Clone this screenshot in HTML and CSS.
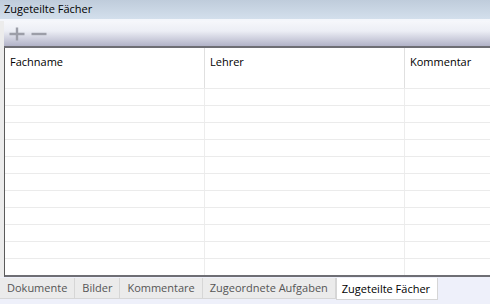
FILE: index.html
```
<!DOCTYPE html>
<html lang="de">
<head>
    <meta charset="UTF-8">
    <title>Zugeteilte Fächer</title>
    <link rel="stylesheet" href="styles.css">
</head>
<body>
    <div class="window">
        <div class="titlebar">Zugeteilte Fächer</div>
        <div class="panel">
            <div class="toolbar">
                <svg class="tool" width="16" height="14" viewBox="0 0 16 14"><path d="M8 0.5v13M0.5 7h15" stroke="#9c9ea8" stroke-width="2.4"/></svg>
                <svg class="tool" width="16" height="14" viewBox="0 0 16 14"><path d="M0.5 7h15" stroke="#9c9ea8" stroke-width="2.4"/></svg>
            </div>
            <div class="grid">
                <div class="row head">
                    <div class="cell">Fachname</div>
                    <div class="cell">Lehrer</div>
                    <div class="cell">Kommentar</div>
                </div>
                <div class="row"><div class="cell"></div><div class="cell"></div><div class="cell"></div></div>
                <div class="row"><div class="cell"></div><div class="cell"></div><div class="cell"></div></div>
                <div class="row"><div class="cell"></div><div class="cell"></div><div class="cell"></div></div>
                <div class="row"><div class="cell"></div><div class="cell"></div><div class="cell"></div></div>
                <div class="row"><div class="cell"></div><div class="cell"></div><div class="cell"></div></div>
                <div class="row"><div class="cell"></div><div class="cell"></div><div class="cell"></div></div>
                <div class="row"><div class="cell"></div><div class="cell"></div><div class="cell"></div></div>
                <div class="row"><div class="cell"></div><div class="cell"></div><div class="cell"></div></div>
                <div class="row"><div class="cell"></div><div class="cell"></div><div class="cell"></div></div>
                <div class="row"><div class="cell"></div><div class="cell"></div><div class="cell"></div></div>
                <div class="row last"><div class="cell"></div><div class="cell"></div><div class="cell"></div></div>
            </div>
        </div>
        <div class="tabs">
            <div class="tab">Dokumente</div>
            <div class="tab">Bilder</div>
            <div class="tab">Kommentare</div>
            <div class="tab">Zugeordnete Aufgaben</div>
            <div class="tab active">Zugeteilte Fächer</div>
        </div>
    </div>
</body>
</html>
```

FILE: styles.css
```
* { box-sizing: border-box; }
body { margin: 0; font-family: "Open Sans", "Noto Sans", sans-serif; font-size: 11px; color: #000; background: #eef0fa; }
.window { width: 490px; height: 304px; overflow: hidden; display: flex; flex-direction: column; }
.titlebar { height: 19px; line-height: 18px; padding-left: 4px; background: linear-gradient(#bfccdb, #d3dfec); }
.panel { background: #ececec; padding-left: 4px; border-top: 2px solid #f4f6fb; }
.toolbar { height: 27px; display: flex; align-items: center; gap: 6px; padding-left: 5px; background: linear-gradient(#f6f7fb 0%, #eceef5 40%, #b2b3c8 100%); border-bottom: 2px solid #6e6e74; }
.tool { display: block; }
.grid { background: #fff; border-left: 1px solid #5a5a5a; border-bottom: 2px solid #6e6e74; }
.row { display: flex; height: 17px; border-bottom: 1px solid #ebebeb; }
.row.last { height: 16px; border-bottom: none; }
.row.head { height: 41px; }
.cell { width: 200px; border-right: 1px solid #ededed; padding: 6px 0 0 5px; flex-shrink: 0; }
.head .cell { border-right-color: #e0e0e0; }
.cell:last-child { flex: 1; border-right: none; }
.tabs { display: flex; align-items: flex-start; padding-top: 1px; }
.tab { height: 21px; line-height: 20px; padding: 0 7px; color: #555; background: #ebebeb; border-right: 1px solid #d6d6d6; border-bottom: 1px solid #d6d6d6; }
.tab.active { background: #fff; color: #000; border: 1px solid #d6d6d6; border-top: none; padding: 0 7px 0 5px; height: 22px; line-height: 21px; }
```
